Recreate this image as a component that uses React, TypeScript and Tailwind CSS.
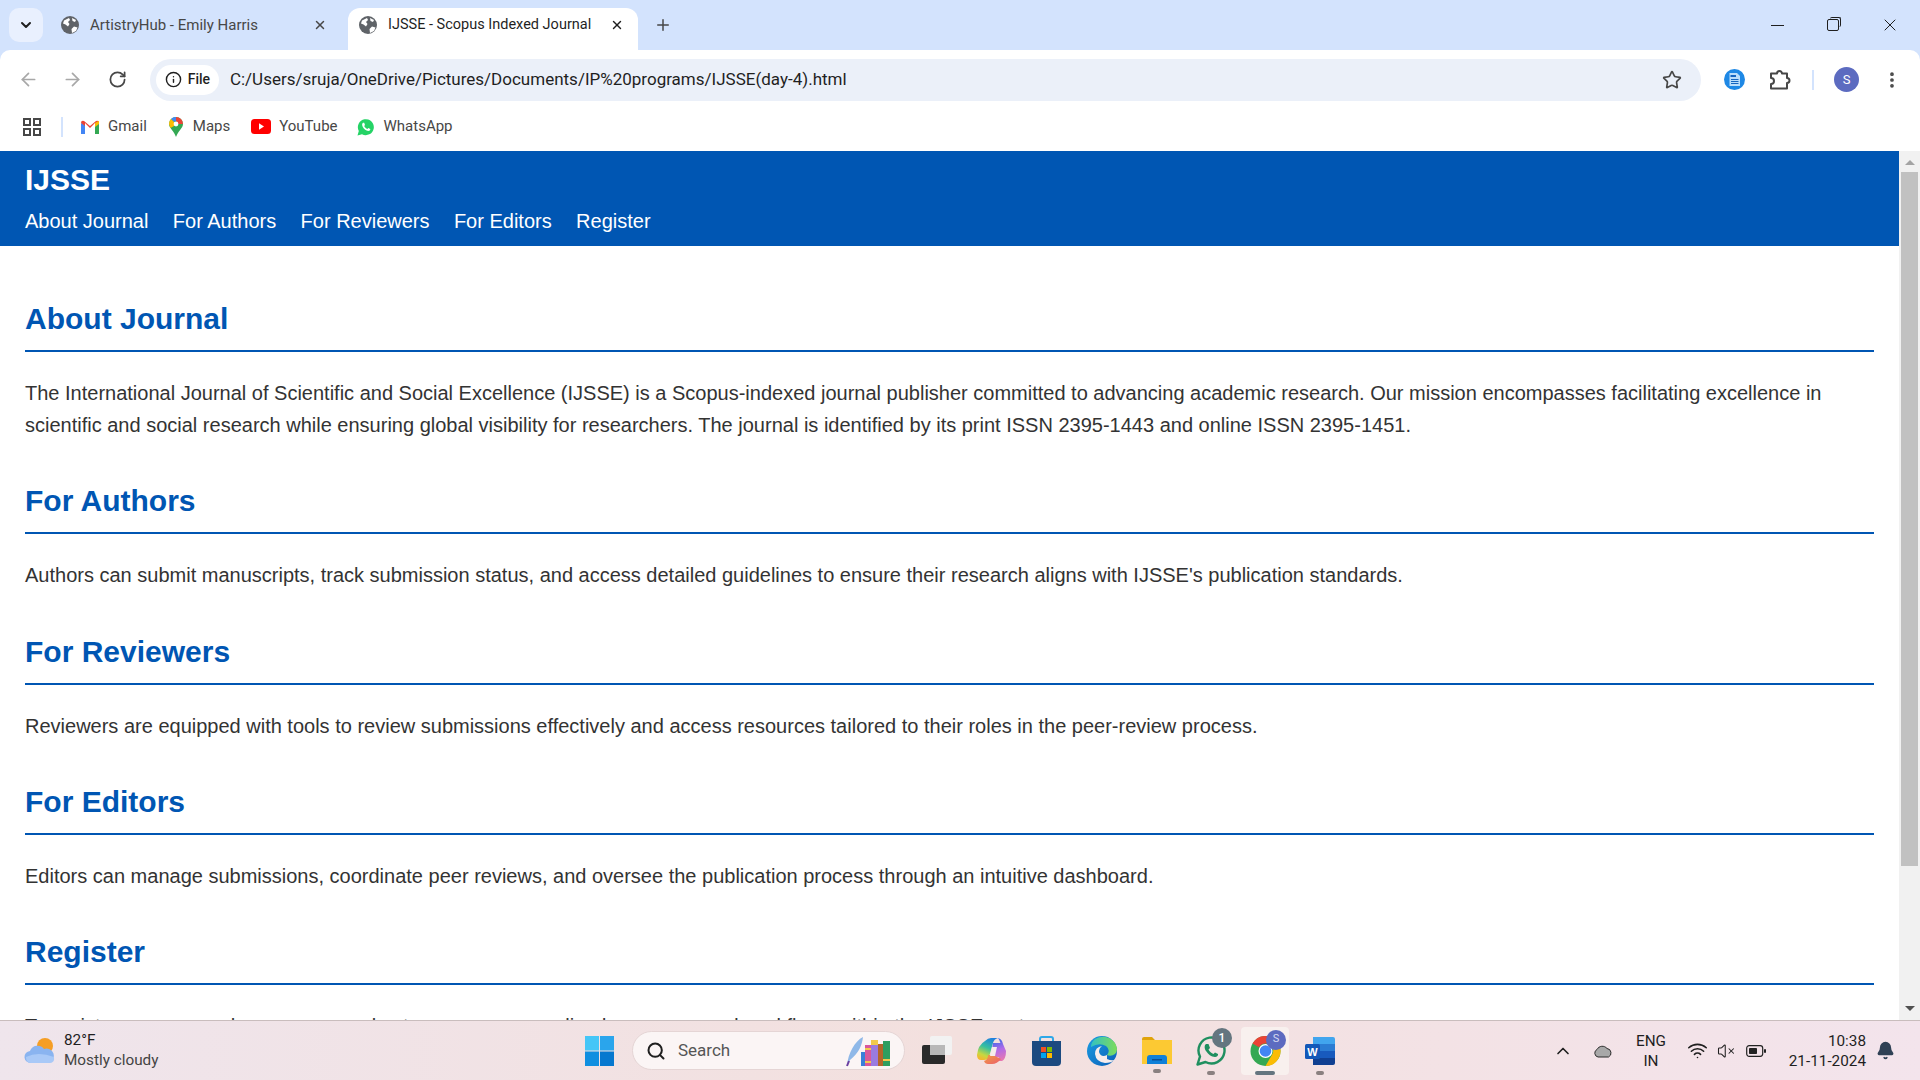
import { ArrowLeft, ArrowRight, Bell, ChevronDown, ChevronUp, EllipsisVertical, Info, Plus, RotateCw, Search, Star, VolumeX, Wifi, X } from 'lucide-react';

const sections = [
  {
    title: 'About Journal',
    text: 'The International Journal of Scientific and Social Excellence (IJSSE) is a Scopus-indexed journal publisher committed to advancing academic research. Our mission encompasses facilitating excellence in scientific and social research while ensuring global visibility for researchers. The journal is identified by its print ISSN 2395-1443 and online ISSN 2395-1451.',
  },
  {
    title: 'For Authors',
    text: "Authors can submit manuscripts, track submission status, and access detailed guidelines to ensure their research aligns with IJSSE's publication standards.",
  },
  {
    title: 'For Reviewers',
    text: 'Reviewers are equipped with tools to review submissions effectively and access resources tailored to their roles in the peer-review process.',
  },
  {
    title: 'For Editors',
    text: 'Editors can manage submissions, coordinate peer reviews, and oversee the publication process through an intuitive dashboard.',
  },
  {
    title: 'Register',
    text: 'To register, users can choose proper roles to access personalized resources and workflows within the IJSSE system.',
  },
];

const navItems = ['About Journal', 'For Authors', 'For Reviewers', 'For Editors', 'Register'];

const GlobeIcon = () => (
  <svg width="18" height="18" viewBox="0 0 18 18">
    <circle cx="9" cy="9" r="9" fill="#5f6368" />
    <path d="M3 4.5 L8 2 L9 4 L7 6 L8.5 8 L7 10.5 L4.5 8.5 L2 7.5 Z M11 17 L10.5 13 L13 10.5 L16.5 11.5 L15 15 Z M11 2 L15 4 L14 6 L11.5 5 Z" fill="#fff" />
  </svg>
);

const AppsIcon = () => (
  <svg width="18" height="18" viewBox="0 0 18 18" fill="none" stroke="#474747" strokeWidth="2">
    <rect x="1" y="1" width="6" height="6" />
    <rect x="11" y="1" width="6" height="6" />
    <rect x="1" y="11" width="6" height="6" />
    <rect x="11" y="11" width="6" height="6" />
  </svg>
);

const GmailIcon = () => (
  <svg width="18" height="14" viewBox="0 0 18 14">
    <path d="M0 3 L0 14 L4 14 L4 5 Z" fill="#4285f4" />
    <path d="M18 3 L18 14 L14 14 L14 5 Z" fill="#34a853" />
    <path d="M0 3 Q0 0 3 1 L9 6 L15 1 Q18 0 18 3 L14 6 L14 3 L9 8 L4 3 L4 6 Z" fill="#ea4335" />
    <path d="M14 3 L18 0.8 L18 4 L14 7 Z" fill="#fbbc04" />
  </svg>
);

const MapsIcon = () => (
  <svg width="14" height="20" viewBox="0 0 14 20">
    <path d="M7 0 A7 7 0 0 1 14 7 C14 11 9 14 7 20 C5 14 0 11 0 7 A7 7 0 0 1 7 0 Z" fill="#34a853" />
    <path d="M2 2 A7 7 0 0 1 7 0 L7 4 L4.8 5 Z" fill="#4285f4" />
    <path d="M7 0 A7 7 0 0 1 14 7 L9 7 L7 4 Z" fill="#ea4335" />
    <path d="M0 7 A7 7 0 0 1 2 2 L5 5 L5 9 L1.5 11 Z" fill="#fbbc04" />
    <circle cx="7" cy="7" r="2.4" fill="#fff" />
  </svg>
);

const YoutubeIcon = () => (
  <svg width="20" height="15" viewBox="0 0 20 15">
    <rect width="20" height="15" rx="3.5" fill="#f00" />
    <path d="M8 4.2 L13 7.5 L8 10.8 Z" fill="#fff" />
  </svg>
);

const WhatsappIcon = ({ size = 18 }: { size?: number }) => (
  <svg width={size} height={size} viewBox="0 0 18 18">
    <path d="M0.5 17.5 L1.8 13 A8 8 0 1 1 5 16.2 Z" fill="#25d366" />
    <path d="M6 4.8 C5 5.5 4.8 7 5.8 9 C7 11 9 12.8 11.2 13 C12.6 13 13.4 12 13.3 11 L11.3 10 L10.4 11 C9 10.5 7.8 9.2 7.2 8 L8 7 L7.2 4.8 Z" fill="#fff" />
  </svg>
);

const PuzzleIcon = () => (
  <svg width="22" height="22" viewBox="0 0 22 22" fill="none" stroke="#474747" strokeWidth="2" strokeLinejoin="round">
    <path d="M2 4.5 H8 A2.5 2.5 0 0 1 13 4.5 H18 V9 A2.5 2.5 0 0 1 18 14 V19.5 H2 V15 A3 3 0 0 0 2 9 Z" />
  </svg>
);

const DocExtensionIcon = () => (
  <svg width="21" height="21" viewBox="0 0 21 21">
    <circle cx="10.5" cy="10.5" r="10.5" fill="#1e88e5" />
    <path d="M5.5 4 H13 L16 7 V17 H5.5 Z" fill="#bbdefb" />
    <path d="M6.5 6 H12 V8 H6.5 Z M7 10 H14.5 V11 H7 Z M7 12 H14.5 V13 H7 Z M7 14 H14.5 V15 H7 Z" fill="#1565c0" />
  </svg>
);

const WeatherIcon = () => (
  <svg width="32" height="30" viewBox="0 0 32 30">
    <circle cx="21" cy="10" r="8" fill="#f59e24" />
    <path d="M7 27 A6 6 0 0 1 6 15 A8 8 0 0 1 20 13 A7 7 0 0 1 25 27 Z" fill="#8ab4f0" />
    <path d="M2 21 Q14 15 30 21 Q31 27 25 27 H7 Q2 27 2 21 Z" fill="#a9c9f7" />
  </svg>
);

const WindowsIcon = () => (
  <svg width="29" height="30" viewBox="0 0 29 30">
    <rect width="14" height="14.5" fill="#45c6f7" />
    <rect x="15" width="14" height="14.5" fill="#2aa5ec" />
    <rect y="15.5" width="14" height="14.5" fill="#0f8fe0" />
    <rect x="15" y="15.5" width="14" height="14.5" fill="#0678cf" />
  </svg>
);

const BooksIcon = () => (
  <svg width="46" height="32" viewBox="0 0 46 32">
    <path d="M2 31 C3 18 10 6 18 2 C17 10 14 18 5 25 L2 31 Z" fill="#8fb8e8" />
    <path d="M2 31 L4 26" stroke="#6b3fa0" strokeWidth="2" />
    <rect x="16" y="17" width="4" height="14" fill="#3b7fd9" />
    <rect x="20" y="10" width="6" height="21" fill="#d9589c" />
    <rect x="20" y="13" width="6" height="2" fill="#f2c94c" />
    <rect x="20" y="26" width="6" height="2" fill="#f2c94c" />
    <rect x="26" y="5" width="7" height="26" fill="#9a7be0" />
    <rect x="26" y="5" width="7" height="5" fill="#f2c94c" />
    <rect x="33" y="9" width="5" height="22" fill="#b5652a" />
    <rect x="38" y="6" width="7" height="25" fill="#2f9e5f" />
    <rect x="38" y="24" width="7" height="2" fill="#f2c94c" />
  </svg>
);

const TaskViewIcon = () => (
  <svg width="30" height="29" viewBox="0 0 30 29">
    <rect x="0" y="9" width="23" height="19" rx="2" fill="#2a2a2a" />
    <rect x="8" y="0" width="22" height="19" rx="2" fill="#f2f2f2" />
    <rect x="8" y="9" width="15" height="10" fill="#b8b8b8" />
  </svg>
);

const CopilotIcon = () => (
  <svg width="29" height="28" viewBox="0 0 29 28">
    <defs>
      <linearGradient id="copA" x1="0.7" y1="0" x2="0.3" y2="1">
        <stop offset="0" stopColor="#1f7fe0" />
        <stop offset="0.45" stopColor="#35c0a0" />
        <stop offset="0.8" stopColor="#c8d840" />
        <stop offset="1" stopColor="#f4b830" />
      </linearGradient>
      <linearGradient id="copB" x1="0.4" y1="0" x2="0.6" y2="1">
        <stop offset="0" stopColor="#2f6ae8" />
        <stop offset="0.5" stopColor="#b06ae8" />
        <stop offset="1" stopColor="#e878b0" />
      </linearGradient>
      <linearGradient id="copC" x1="0" y1="0" x2="1" y2="1">
        <stop offset="0" stopColor="#f0a040" />
        <stop offset="1" stopColor="#ec5c6c" />
      </linearGradient>
    </defs>
    <path d="M14 1 H21 Q17 2 16 6 L12 20 Q11 23 7 23 H4 Q0 23 0 18 Q1 8 8 4 Q11 1 14 1 Z" fill="url(#copA)" />
    <path d="M21 1 Q25 2 26 7 L29 14 Q29 22 25 24 H19 Q22 22 22 19 L24 11 Q24 5 21 1 Z M16 6 H24 V20 H14 Z" fill="url(#copB)" />
    <path d="M11 18 H16 L24 22 Q20 27 15 27 H11 Q8 27 7 24 Q11 23 11 18 Z" fill="url(#copC)" />
    <path d="M15 10 H20 L18 19 H13 Z" fill="#f6ecec" />
  </svg>
);

const StoreIcon = () => (
  <svg width="29" height="30" viewBox="0 0 29 30">
    <path d="M8 6 V3 Q8 1 10 1 H19 Q21 1 21 3 V6" fill="none" stroke="#2fa8e8" strokeWidth="2" />
    <path d="M0 5 H29 V26 Q29 30 25 30 H4 Q0 30 0 26 Z" fill="#1c4a80" />
    <rect x="9" y="11" width="5" height="5" fill="#f25022" />
    <rect x="15" y="11" width="5" height="5" fill="#7fba00" />
    <rect x="9" y="17" width="5" height="5" fill="#00a4ef" />
    <rect x="15" y="17" width="5" height="5" fill="#ffb900" />
  </svg>
);

const EdgeIcon = () => (
  <svg width="30" height="30" viewBox="0 0 30 30">
    <defs>
      <linearGradient id="edgeA" x1="0" y1="0" x2="1" y2="1">
        <stop offset="0" stopColor="#1b9de2" />
        <stop offset="1" stopColor="#0b5fb8" />
      </linearGradient>
      <linearGradient id="edgeB" x1="0" y1="0" x2="1" y2="0">
        <stop offset="0" stopColor="#35c1c1" />
        <stop offset="1" stopColor="#7ddc5a" />
      </linearGradient>
    </defs>
    <circle cx="15" cy="15" r="15" fill="url(#edgeA)" />
    <path d="M8 3 Q20 -3 28 7 Q32 14 28 18 Q24 21 20 19 Q24 14 19 10 Q12 6 4 11 Q4 6 8 3 Z" fill="url(#edgeB)" />
    <path d="M20 19 Q14 22 12 16 Q12 12 15 10 Q8 11 8 18 Q9 26 18 27 Q24 27 28 24 Q24 25 20 23 Z" fill="#f6ecec" />
  </svg>
);

const ExplorerIcon = () => (
  <svg width="30" height="27" viewBox="0 0 30 27">
    <path d="M0 2 Q0 0 2 0 H10 L13 3 H30 V8 H0 Z" fill="#e0a30a" />
    <rect y="3" width="30" height="24" fill="#fcc933" />
    <path d="M5 27 V21 Q5 18 8 18 H22 Q25 18 25 21 V27 Z" fill="#1080d8" />
    <rect x="10" y="22" width="10" height="1.5" fill="#0a4f96" />
  </svg>
);

const WhatsappOutlineIcon = () => (
  <svg width="30" height="30" viewBox="0 0 30 30">
    <path d="M1.5 28.5 L4 20.5 A13 13 0 1 1 9.5 26 Z" fill="none" stroke="#1f8f5f" strokeWidth="2.4" strokeLinejoin="round" />
    <path d="M10 8 C8.5 9 8 12 10 15 C12 18 15.5 21 19 21 C21 21 22.5 19.5 22 18 L19 16.5 L17.5 18 C15.5 17.5 13.5 15.5 12.5 13.5 L14 12 L12.5 8 Z" fill="#1f8f5f" />
  </svg>
);

const ChromeIcon = () => (
  <svg width="31" height="30" viewBox="0 0 30 30">
    <circle cx="15" cy="15" r="15" fill="#34a853" />
    <path d="M2 7.5 A15 15 0 0 1 28 7.5 H15 A7.5 7.5 0 0 0 8.5 11.3 Z" fill="#ea4335" />
    <path d="M28 7.5 A15 15 0 0 1 15 30 L21.5 18.8 A7.5 7.5 0 0 0 20 9 Z" fill="#fbbc04" />
    <circle cx="15" cy="15" r="7" fill="#fff" />
    <circle cx="15" cy="15" r="5.8" fill="#4285f4" />
  </svg>
);

const WordIcon = () => (
  <svg width="30" height="28" viewBox="0 0 30 28">
    <path d="M8 0 H28 Q30 0 30 2 V7 H8 Z" fill="#41a5ee" />
    <rect x="8" y="7" width="22" height="7" fill="#2b7cd3" />
    <rect x="8" y="14" width="22" height="7" fill="#185abd" />
    <path d="M8 21 H30 V26 Q30 28 28 28 H8 Z" fill="#103f91" />
    <rect y="7" width="15" height="15" rx="1.5" fill="#1358b8" />
    <text x="7.5" y="18.5" textAnchor="middle" fontSize="11" fontWeight="700" fill="#fff" fontFamily="Liberation Sans, sans-serif">W</text>
  </svg>
);

const OneDriveIcon = () => (
  <svg width="20" height="14" viewBox="0 0 20 14">
    <path d="M5 13 A4 4 0 0 1 4 5.5 A6 6 0 0 1 14 4.5 A4.5 4.5 0 0 1 15.5 13 Z" fill="#a8a8a8" stroke="#2b2b2b" strokeWidth="1" />
  </svg>
);

const BatteryIcon = () => (
  <svg width="20" height="12" viewBox="0 0 20 12" fill="none">
    <rect x="0.7" y="0.7" width="16" height="10.6" rx="2.5" stroke="#222" strokeWidth="1.2" />
    <rect x="3" y="3" width="8" height="6" rx="0.8" fill="#222" />
    <rect x="18" y="4" width="2" height="4" rx="1" fill="#222" />
  </svg>
);

const Browser = () => (
  <div className="bg-[#d3e3fd] font-['Roboto',sans-serif]">
    <div className="flex h-[50px] items-end pl-[9px]">
      <div className="mb-2 flex h-[34px] w-[34px] items-center justify-center rounded-[10px] bg-[#e9f0fe]">
        <ChevronDown size={16} strokeWidth={3} color="#1f1f1f" />
      </div>
      <div className="flex h-[42px] w-[305px] items-center pb-2 pl-[18px] text-[15px] text-[#474747]">
        <GlobeIcon />
        <span className="ml-[11px] w-[223px]">ArtistryHub - Emily Harris</span>
        <X size={14} strokeWidth={2.5} color="#474747" />
      </div>
      <div className="flex h-[42px] w-[290px] items-center rounded-t-[12px] bg-white pb-2 pl-[11px] text-[14.5px] text-[#1f1f1f]">
        <GlobeIcon />
        <span className="ml-[11px] w-[222px]">IJSSE - Scopus Indexed Journal</span>
        <X size={14} strokeWidth={2.5} color="#1f1f1f" />
      </div>
      <div className="ml-[16px] flex h-[42px] items-center pb-2">
        <Plus size={18} strokeWidth={2} color="#474747" />
      </div>
      <div className="ml-auto flex h-[50px] items-center pr-[20px]">
        <div className="h-px w-[13px] bg-[#1f1f1f]" />
        <div className="relative ml-[43px] h-[12px] w-[12px] rounded-[2px] border border-[#1f1f1f]">
          <div className="absolute left-[2px] top-[-3px] h-[10px] w-[11px] rounded-[2px] border-r border-t border-[#1f1f1f]" />
        </div>
        <X className="ml-[41px]" size={20} strokeWidth={1.2} color="#1f1f1f" />
      </div>
    </div>
    <div className="rounded-t-[10px] bg-white">
      <div className="flex h-[55px] items-center pl-[18px] pr-[18px] pt-[4px]">
        <ArrowLeft size={21} strokeWidth={2} color="#a8a8a8" />
        <ArrowRight className="ml-[23px]" size={21} strokeWidth={2} color="#a8a8a8" />
        <RotateCw className="ml-[25px]" size={19} strokeWidth={2.2} color="#474747" />
        <div className="ml-[23px] flex h-[42px] w-[1553px] items-center rounded-full bg-[#ebf0f9] pl-[6px] pr-[19px] text-[#1f1f1f]">
          <div className="flex h-[30px] w-[63px] items-center justify-center gap-[6px] rounded-full bg-white text-[14px] font-medium">
            <Info size={17} strokeWidth={2} color="#1f1f1f" />
            <span>File</span>
          </div>
          <span className="ml-[11px] text-[17px]">C:/Users/sruja/OneDrive/Pictures/Documents/IP%20programs/IJSSE(day-4).html</span>
          <Star className="ml-auto" size={20} strokeWidth={2} color="#474747" />
        </div>
        <div className="ml-[23px]">
          <DocExtensionIcon />
        </div>
        <div className="ml-[24px]">
          <PuzzleIcon />
        </div>
        <div className="ml-[21px] h-[20px] w-[2px] bg-[#d3e3fd]" />
        <div className="ml-[20px] flex h-[25px] w-[25px] items-center justify-center rounded-full bg-[#5c6bc0] text-[13px] text-white">S</div>
        <EllipsisVertical className="ml-[23px]" size={20} strokeWidth={2.5} color="#474747" />
      </div>
      <div className="flex h-[46px] items-center pb-[3px] pl-[23px] text-[15px] text-[#474747]">
        <AppsIcon />
        <div className="ml-[20px] h-[20px] w-[2px] bg-[#d3e3fd]" />
        <div className="ml-[18px] flex items-center gap-[9px]">
          <GmailIcon />
          <span>Gmail</span>
        </div>
        <div className="ml-[22px] flex items-center gap-[10px]">
          <MapsIcon />
          <span>Maps</span>
        </div>
        <div className="ml-[21px] flex items-center gap-[8px]">
          <YoutubeIcon />
          <span>YouTube</span>
        </div>
        <div className="ml-[19px] flex items-center gap-[9px]">
          <WhatsappIcon />
          <span>WhatsApp</span>
        </div>
      </div>
    </div>
  </div>
);

const Page = () => (
  <div className="flex min-h-0 flex-1 overflow-hidden font-['Liberation_Sans',Arial,sans-serif] text-[20px] leading-[32px] text-[#333]">
    <div className="min-w-0 flex-1 overflow-hidden">
      <header className="bg-[#0056b3] px-[25px] pb-[9px] pt-[5px] text-white">
        <h1 className="text-[30px] font-bold leading-[48px]">IJSSE</h1>
        <nav className="mt-px flex gap-[24.4px]">
          {navItems.map((item) => (
            <span key={item}>{item}</span>
          ))}
        </nav>
      </header>
      <main className="px-[25px] pt-[46px]">
        {sections.map((section) => (
          <section key={section.title} className="mb-[33.3px]">
            <h2 className="border-b-2 border-[#0056b3] pb-[7px] pt-[3px] text-[30px] font-bold leading-[48px] text-[#0056b3]">{section.title}</h2>
            <p className="mt-[25px]">{section.text}</p>
          </section>
        ))}
      </main>
    </div>
    <div className="flex w-[21px] shrink-0 flex-col items-center bg-[#f1f1f1]">
      <div className="mt-[9px] h-0 w-0 border-x-[5px] border-b-[5px] border-x-transparent border-b-[#a3a3a3]" />
      <div className="mt-[7px] h-[694px] w-[17px] bg-[#c1c1c1]" />
      <div className="mb-[9px] mt-auto h-0 w-0 border-x-[5px] border-t-[5px] border-x-transparent border-t-[#505050]" />
    </div>
  </div>
);

const Taskbar = () => (
  <div className="flex h-[60px] shrink-0 items-center border-t border-[#c9bdbd] bg-gradient-to-r from-[#efe5ec] via-[#f3e0de] to-[#f3e4ec] font-['Roboto',sans-serif] text-[#1f1f1f]">
    <div className="ml-[24px] flex w-[561px] items-center">
      <WeatherIcon />
      <div className="mb-[2px] ml-[8px] text-[15.3px] leading-[20px]">
        <div>82°F</div>
        <div className="text-[#444]">Mostly cloudy</div>
      </div>
    </div>
    <WindowsIcon />
    <div className="ml-[18px] flex h-[39px] w-[273px] items-center rounded-full border border-[#e5d5d5] bg-[#fbf5f5] pl-[13px] pr-[13px]">
      <Search size={20} strokeWidth={2.4} color="#1f1f1f" />
      <span className="ml-[12px] text-[17px] text-[#555]">Search</span>
      <div className="ml-auto">
        <BooksIcon />
      </div>
    </div>
    <div className="ml-[17px]">
      <TaskViewIcon />
    </div>
    <div className="ml-[25px]">
      <CopilotIcon />
    </div>
    <div className="ml-[26px]">
      <StoreIcon />
    </div>
    <div className="ml-[26px]">
      <EdgeIcon />
    </div>
    <div className="relative ml-[25px]">
      <ExplorerIcon />
      <div className="absolute bottom-[-9px] left-[11px] h-[4px] w-[8px] rounded-full bg-[#8a8080]" />
    </div>
    <div className="relative ml-[24px]">
      <WhatsappOutlineIcon />
      <div className="absolute bottom-[-9px] left-[11px] h-[4px] w-[8px] rounded-full bg-[#8a8080]" />
      <div className="absolute right-[-6px] top-[-8px] flex h-[20px] w-[20px] items-center justify-center rounded-full bg-[#64757f] text-[12px] font-medium text-white">1</div>
    </div>
    <div className="relative ml-[15px] flex h-[48px] w-[48px] items-center justify-center rounded-[4px] bg-[#f8f0ee]">
      <ChromeIcon />
      <div className="absolute bottom-[0px] left-[14px] h-[4px] w-[20px] rounded-full bg-[#64757f]" />
      <div className="absolute right-[3px] top-[3px] flex h-[20px] w-[20px] items-center justify-center rounded-full bg-[#5c6bc0] text-[11px] text-[#d5d9f0]">S</div>
    </div>
    <div className="relative ml-[16px]">
      <WordIcon />
      <div className="absolute bottom-[-10px] left-[11px] h-[4px] w-[8px] rounded-full bg-[#8a8080]" />
    </div>
    <div className="ml-[218px]">
      <ChevronUp size={20} strokeWidth={2} color="#1f1f1f" />
    </div>
    <div className="ml-[20px]">
      <OneDriveIcon />
    </div>
    <div className="ml-[21px] w-[34px] whitespace-nowrap text-center text-[15.3px] leading-[20px]">
      <div>ENG</div>
      <div>IN</div>
    </div>
    <Wifi className="ml-[19px]" size={21} strokeWidth={1.8} color="#1f1f1f" />
    <VolumeX className="ml-[9px]" size={18} strokeWidth={1.4} color="#1f1f1f" />
    <div className="ml-[11px]">
      <BatteryIcon />
    </div>
    <div className="ml-[20px] w-[80px] whitespace-nowrap text-right text-[15.3px] leading-[20px]">
      <div>10:38</div>
      <div>21-11-2024</div>
    </div>
    <Bell className="ml-[10px]" size={19} strokeWidth={2} color="#2f4155" fill="#2f4155" />
  </div>
);

const App = () => {
  return (
    <div className="flex h-[1080px] w-[1920px] flex-col overflow-hidden bg-white">
      <Browser />
      <Page />
      <Taskbar />
    </div>
  );
};

export default App;
